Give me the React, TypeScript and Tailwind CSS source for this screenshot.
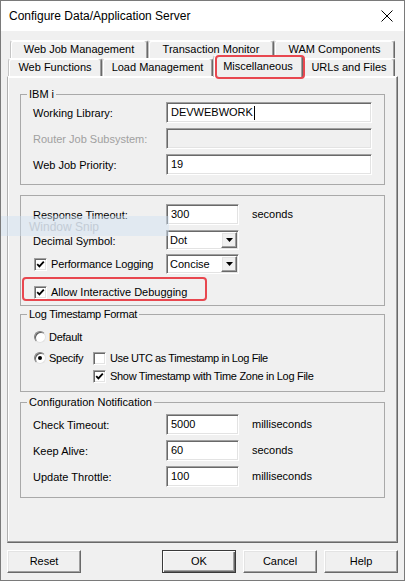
import React from "react";

const sunken =
  "border border-t-[#a0a0a0] border-l-[#a0a0a0] border-r-white border-b-white shadow-[inset_1px_1px_0_#696969,inset_-1px_-1px_0_#e3e3e3]";
const raised =
  "border border-t-white border-l-white border-r-[#696969] border-b-[#696969] shadow-[inset_-1px_-1px_0_#a0a0a0,inset_1px_1px_0_#e3e3e3]";
const tabBase =
  "flex h-[18px] items-center justify-center rounded-t-[3px] border-t border-l border-r border-t-white border-l-[#c4c4c4] border-r-[#696969] shadow-[inset_-1px_0_0_#a0a0a0,inset_1px_1px_0_#fff]";

function CheckBox({ checked }: { checked?: boolean }) {
  return (
    <span
      className={`flex h-[13px] w-[13px] shrink-0 items-center justify-center bg-white ${sunken}`}
    >
      {checked && (
        <svg width="9" height="9" viewBox="0 0 9 9">
          <path
            d="M1.2 4.2 L3.4 6.4 L7.8 1.6"
            stroke="#000"
            strokeWidth="1.8"
            fill="none"
          />
        </svg>
      )}
    </span>
  );
}

function Radio({ checked }: { checked?: boolean }) {
  return (
    <span className="flex h-[12px] w-[12px] shrink-0 items-center justify-center rounded-full border border-t-[#808080] border-l-[#808080] border-r-[#e3e3e3] border-b-[#e3e3e3] bg-white shadow-[inset_1px_1px_0_#5c5c5c]">
      {checked && <span className="h-[4px] w-[4px] rounded-full bg-black" />}
    </span>
  );
}

function Combo({ value }: { value: string }) {
  return (
    <div
      className={`flex h-[20px] w-[73px] items-center justify-between bg-white pl-[3px] pr-[1px] ${sunken}`}
    >
      <span>{value}</span>
      <span
        className={`flex h-[16px] w-[16px] items-center justify-center bg-[#f0f0f0] ${raised}`}
      >
        <svg width="7" height="4" viewBox="0 0 7 4">
          <path d="M0 0 H7 L3.5 4 Z" fill="#000" />
        </svg>
      </span>
    </div>
  );
}

function TextBox(props: {
  value?: string;
  wide?: boolean;
  disabled?: boolean;
  caret?: boolean;
}) {
  return (
    <div
      className={`flex h-[21px] items-center pl-[4px] ${
        props.wide ? "w-[206px]" : "w-[73px]"
      } ${props.disabled ? "bg-[#f0f0f0]" : "bg-white"} ${sunken}`}
    >
      <span>{props.value}</span>
      {props.caret && <span className="ml-px h-[14px] w-px bg-black" />}
    </div>
  );
}

function Field(props: {
  label: string;
  disabled?: boolean;
  unit?: string;
  children: React.ReactNode;
}) {
  return (
    <div className="flex items-center">
      <span
        className={`w-[133px] pt-[2px] ${
          props.disabled ? "text-[#a0a0a0]" : ""
        }`}
      >
        {props.label}
      </span>
      {props.children}
      {props.unit && <span className="ml-[13px]">{props.unit}</span>}
    </div>
  );
}

function Group(props: {
  title: string;
  className: string;
  children: React.ReactNode;
}) {
  return (
    <fieldset
      className={`mx-[12px] w-[365px] border border-[#a9a9a9] ${props.className}`}
    >
      <legend className="ml-[6px] px-[2px] leading-[13px]">{props.title}</legend>
      {props.children}
    </fieldset>
  );
}

function Button(props: { label: string; isDefault?: boolean }) {
  return (
    <button
      className={`flex h-[23px] w-[74px] items-center justify-center bg-[#f0f0f0] ${
        props.isDefault
          ? "border border-[#3a3a3a] shadow-[inset_1px_1px_0_#fff,inset_-1px_-1px_0_#696969,inset_-2px_-2px_0_#a0a0a0]"
          : raised
      }`}
    >
      {props.label}
    </button>
  );
}

export default function App() {
  return (
    <div className="relative flex h-[581px] w-[405px] flex-col overflow-hidden border border-[#7a7a7a] bg-[#f0f0f0] font-['Liberation_Sans',Arial,sans-serif] text-[11px] leading-[13px] text-black">
      {/* Title bar */}
      <div className="flex h-[30px] shrink-0 items-center justify-between bg-white pl-[8px] pr-[11px]">
        <span className="text-[12px] leading-[14px]">
          Configure Data/Application Server
        </span>
        <svg width="12" height="12" viewBox="0 0 12 12">
          <path
            d="M0.5 0.5 L11.5 11.5 M11.5 0.5 L0.5 11.5"
            stroke="#000"
            strokeWidth="1"
          />
        </svg>
      </div>

      <div className="flex flex-col px-[6px]">
        {/* Tabs, back row */}
        <div className="mt-[9px] flex h-[18px] pl-[3px]">
          <div className={`${tabBase} w-[138px]`}>Web Job Management</div>
          <div className={`${tabBase} w-[126px]`}>Transaction Monitor</div>
          <div className={`${tabBase} w-[121px]`}>WAM Components</div>
        </div>
        {/* Tabs, front row */}
        <div className="flex h-[18px] items-start pl-[1px]">
          <div className={`${tabBase} w-[94px]`}>Web Functions</div>
          <div className={`${tabBase} w-[111px]`}>Load Management</div>
          <div className="relative z-10 -mt-[3px] flex h-[22px] w-[90px] items-start justify-center rounded-t-[3px] border-t border-l border-r border-t-white border-l-[#c4c4c4] border-r-[#696969] bg-[#f0f0f0] pt-[4px] shadow-[inset_-1px_0_0_#a0a0a0,inset_1px_1px_0_#fff]">
            Miscellaneous
            <span className="absolute -top-[1px] left-[1px] -right-[3px] -bottom-[2px] rounded-[4px] border-2 border-[#e8474f]" />
          </div>
          <div className={`${tabBase} w-[92px]`}>URLs and Files</div>
        </div>

        {/* Tab pane */}
        <div className="flex h-[467px] flex-col border border-t-white border-l-[#b0b0b0] border-r-[#696969] border-b-[#696969] shadow-[inset_-1px_-1px_0_#a0a0a0,inset_1px_1px_0_#fff]">
          <Group title="IBM i" className="mt-[11px]">
            <div className="flex flex-col gap-[5px] pt-[1px] pb-[9px] pl-[12px]">
              <Field label="Working Library:">
                <TextBox value="DEVWEBWORK" wide caret />
              </Field>
              <Field label="Router Job Subsystem:" disabled>
                <TextBox wide disabled />
              </Field>
              <Field label="Web Job Priority:">
                <TextBox value="19" wide />
              </Field>
            </div>
          </Group>

          <div className="mx-[12px] mt-[10px] flex w-[365px] flex-col border border-[#a9a9a9] pt-[8px] pb-[1px] pl-[12px]">
            <Field label="Response Timeout:" unit="seconds">
              <TextBox value="300" />
            </Field>
            <div className="mt-[5px]">
              <Field label="Decimal Symbol:">
                <Combo value="Dot" />
              </Field>
            </div>
            <div className="mt-[4px] flex items-center">
              <div className="flex w-[133px] items-center gap-[4px] pl-[1px]">
                <CheckBox checked />
                <span className="tracking-[-0.15px]">Performance Logging</span>
              </div>
              <Combo value="Concise" />
            </div>
            <div className="relative mt-[6px] flex h-[24px] items-center gap-[4px] pl-[1px]">
              <CheckBox checked />
              <span>Allow Interactive Debugging</span>
              <span className="absolute -top-[3px] -left-[11px] h-[24px] w-[185px] rounded-[4px] border-2 border-[#e8474f]" />
            </div>
          </div>

          <Group title="Log Timestamp Format" className="mt-[2px] tracking-[-0.25px]">
            <div className="flex flex-col pt-[8px] pb-[7px] pl-[13px]">
              <div className="flex h-[16px] items-center gap-[3px]">
                <Radio />
                <span>Default</span>
              </div>
              <div className="mt-[5px] flex h-[16px] items-center">
                <div className="flex w-[59px] items-center gap-[3px]">
                  <Radio checked />
                  <span>Specify</span>
                </div>
                <div className="flex items-center gap-[4px]">
                  <CheckBox />
                  <span className="tracking-[-0.4px]">
                    Use UTC as Timestamp in Log File
                  </span>
                </div>
              </div>
              <div className="mt-[2px] flex h-[16px] items-center gap-[4px] pl-[59px]">
                <CheckBox checked />
                <span className="tracking-[-0.3px]">
                  Show Timestamp with Time Zone in Log File
                </span>
              </div>
            </div>
          </Group>

          <Group title="Configuration Notification" className="mt-[4px]">
            <div className="flex flex-col gap-[5px] pt-[5px] pb-[10px] pl-[12px]">
              <Field label="Check Timeout:" unit="milliseconds">
                <TextBox value="5000" />
              </Field>
              <Field label="Keep Alive:" unit="seconds">
                <TextBox value="60" />
              </Field>
              <Field label="Update Throttle:" unit="milliseconds">
                <TextBox value="100" />
              </Field>
            </div>
          </Group>
        </div>

        {/* Buttons */}
        <div className="mt-[7px] flex justify-between">
          <Button label="Reset" />
          <div className="flex gap-[7px]">
            <Button label="OK" isDefault />
            <Button label="Cancel" />
            <Button label="Help" />
          </div>
        </div>
      </div>

      {/* Leftover snipping-tool ghost over the page */}
      <div className="absolute left-0 top-[215px] flex h-[20px] w-[168px] items-end bg-[#cfe0f1]/45 pb-[3px] pl-[28px] text-[12px] leading-[12px] text-[#c3ccd6]">
        Window Snip
      </div>
    </div>
  );
}
